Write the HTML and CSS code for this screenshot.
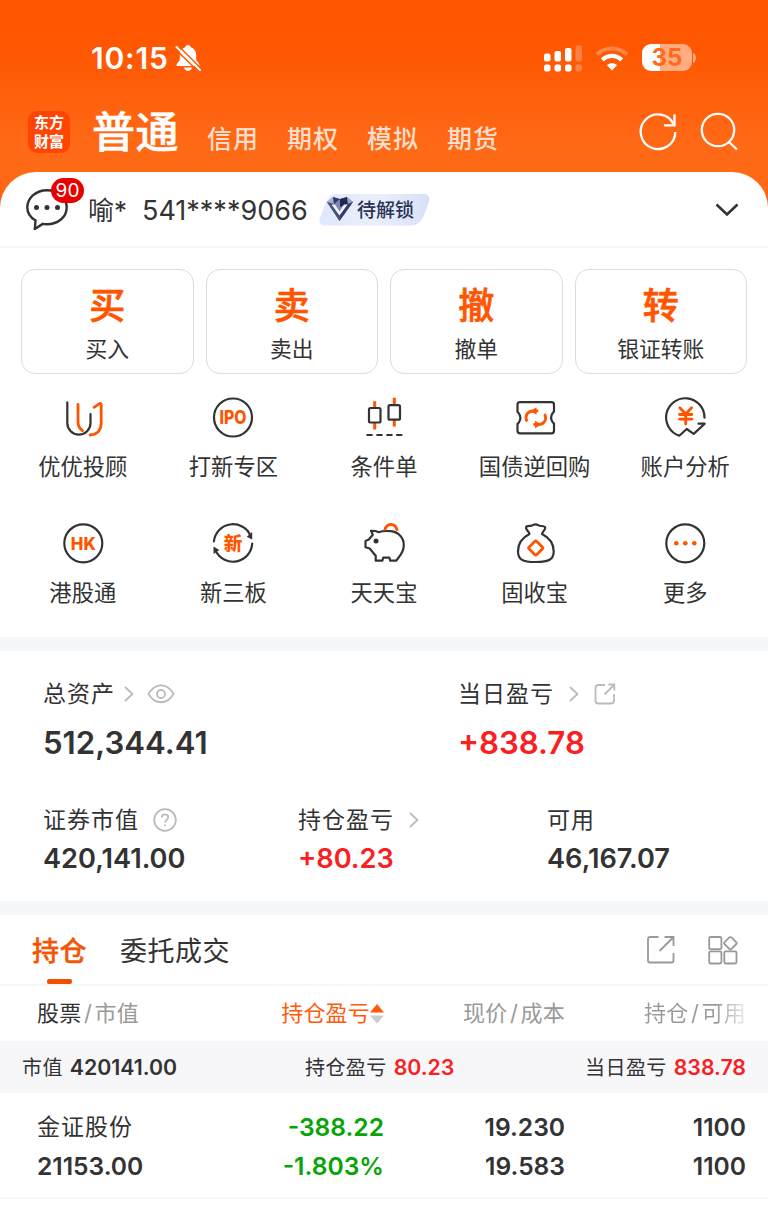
FILE: index.html
```html
<!DOCTYPE html>
<html lang="zh-CN">
<head>
    <meta charset="UTF-8">
    <meta name="viewport" content="width=device-width, initial-scale=1.0">
    <title>普通交易</title>
    <link rel="stylesheet" href="styles.css">
</head>
<body>
    <header class="top">
        <div class="status">
            <span class="time">10:15</span>
            <svg class="bell" width="28" height="28" viewBox="0 0 28 28">
                <path d="M14 1c-1.600 0-2.600 1-2.800 2.300C7.500 4.500 5.800 7.500 5.800 11v4.500c0 1.800-3.300 3.500-3.300 5.500 0 .7.500 1 1.200 1h20.600c.7 0 1.200-.3 1.200-1 0-2-3.300-3.700-3.300-5.500V11c0-3.500-1.700-6.500-5.400-7.700C16.600 2 15.600 1 14 1zM10 23.500h8c-.5 2.200-2 3.500-4 3.500s-3.500-1.300-4-3.500z" fill="#fff"/>
                <path d="M4.500 2L27 24.500" stroke="#ff5a03" stroke-width="1.600"/>
                <path d="M2.500 3L26 26" stroke="#fff" stroke-width="2" stroke-linecap="round"/>
                <path d="M1.500 5.200L23.500 26.700" stroke="#ff5a03" stroke-width="1.600"/>
            </svg>
            <svg class="signal" width="40" height="28" viewBox="0 0 40 28">
                <g fill="#fff">
                    <rect x="1" y="9.500" width="6.500" height="8" rx="2"/>
                    <rect x="11.500" y="7" width="6.500" height="10.500" rx="2"/>
                    <rect x="22" y="4" width="6.500" height="13.500" rx="2"/>
                    <rect x="1" y="20.500" width="6.500" height="7" rx="2"/>
                    <rect x="11.500" y="20.500" width="6.500" height="7" rx="2"/>
                    <rect x="22" y="20.500" width="6.500" height="7" rx="2"/>
                    <g opacity=".25">
                        <rect x="32.500" y="1.500" width="6.500" height="16" rx="2"/>
                        <rect x="32.500" y="20.500" width="6.500" height="7" rx="2"/>
                    </g>
                </g>
            </svg>
            <svg class="wifi" width="34" height="26" viewBox="0 0 34 26">
                <path d="M2 9.500C10.500 1.500 23.500 1.500 32 9.500" fill="none" stroke="#fff" stroke-opacity=".28" stroke-width="4"/>
                <path d="M7.300 15C13 9.600 21 9.600 26.700 15" fill="none" stroke="#fff" stroke-width="4.200"/>
                <path d="M17 25.500l-5-5.300c2.800-2.500 7.200-2.500 10 0z" fill="#fff"/>
            </svg>
            <div class="battery"><span>35</span></div>
            <svg class="nub" width="4" height="10" viewBox="0 0 4 10"><path d="M0 0c4 1.500 4 8.500 0 10z" fill="#fff" opacity=".5"/></svg>
        </div>
        <div class="modes">
            <div class="logo">东方<br>财富</div>
            <a class="mode current">普通</a>
            <a class="mode">信用</a>
            <a class="mode">期权</a>
            <a class="mode">模拟</a>
            <a class="mode">期货</a>
            <svg class="refresh" width="40" height="40" viewBox="0 0 40 40" fill="none" stroke="#fff" stroke-width="2.300">
                <path d="M38.300 20A17.300 17.300 0 1 1 36.700 12.500"/>
                <path d="M37.500 2.300V13.300H27"/>
            </svg>
            <svg class="search" width="40" height="40" viewBox="0 0 40 40" fill="none" stroke="#fff" stroke-width="2.300">
                <circle cx="19" cy="18" r="16.200"/>
                <path d="M29.500 29.500l8.500 8"/>
            </svg>
        </div>
    </header>

    <main class="sheet">
        <div class="account">
            <div class="message">
                <svg width="44" height="44" viewBox="0 0 44 44">
                    <path d="M10.500 34.500C5.500 31.500 2.300 27 2.300 21.500 2.300 11.800 11.200 4.200 22 4.200s19.700 7.600 19.700 17.300S32.800 38.300 22 38.300c-1.500 0-3-.1-4.300-.4L9.800 43z" fill="none" stroke="#333" stroke-width="2.400"/>
                    <g fill="#333"><circle cx="11.500" cy="21.500" r="2.500"/><circle cx="22" cy="21.500" r="2.500"/><circle cx="32.500" cy="21.500" r="2.500"/></g>
                </svg>
                <span class="count">90</span>
            </div>
            <span class="owner">喻*</span>
            <span class="number">541****9066</span>
            <div class="unlock">
                <svg width="112" height="32" viewBox="0 0 112 32">
                    <defs>
                        <linearGradient id="pill" x1="0" x2="1"><stop offset="0" stop-color="#e0e7fa"/><stop offset=".5" stop-color="#e9effc"/><stop offset="1" stop-color="#d9e1f8"/></linearGradient>
                    </defs>
                    <path d="M15 0H104c5 0 7.500 3 6 7.500L105.500 20c-3 7.500-7 11.500-14 11.500H6c-5 0-6.500-3-5-7.500L6 11C8.500 4 11 0 17 0z" fill="url(#pill)"/>
                    <path d="M8 8l6-5 7 2 7-2 6 5-13.500 19z" fill="#7d88b5"/>
                    <path d="M8 8l6-5 1 7z" fill="#a7b2d8"/>
                    <path d="M14 3l7 2-6 5z" fill="#303a63"/>
                    <path d="M21 5l7-2 1 7-8 3z" fill="#1e2850"/>
                    <path d="M28 3l6 5-5 2z" fill="#969fc6"/>
                    <path d="M15 10l6 10-.5 7L8 8z" fill="#45507f"/>
                    <path d="M29 10l-8 10-.5 7L34 8z" fill="#303b6b"/>
                    <path d="M12.500 10.500l8 11L28.500 10.500h-3.500l-4.500 7-4.500-7z" fill="#f3f4fa"/>
                </svg>
                <span>待解锁</span>
            </div>
            <svg class="expand" width="26" height="16" viewBox="0 0 26 16"><path d="M2.500 2.500L13 12.500 23.500 2.500" fill="none" stroke="#333" stroke-width="2.600"/></svg>
        </div>

        <div class="cards">
            <a class="card"><b>买</b><span>买入</span></a>
            <a class="card"><b>卖</b><span>卖出</span></a>
            <a class="card"><b>撤</b><span>撤单</span></a>
            <a class="card"><b>转</b><span>银证转账</span></a>
        </div>

        <div class="menu">
            <a class="entry">
                <svg class="icon" viewBox="0 0 48 48">
                    <path d="M8.300 9.300V30a11.600 11.600 0 0 0 23.200 0V21"/>
                    <path class="hot" d="M19 11.500V29c0 4 1.500 6.500 4.500 8.700M35 14.300l5.200-3.500c1-.6 2-.2 2 1V30c0 7-4 11.500-11.200 12"/>
                </svg>
                <span>优优投顾</span>
            </a>
            <a class="entry">
                <svg class="icon" viewBox="0 0 48 48">
                    <circle cx="24" cy="24.500" r="19"/>
                    <text x="24" y="31" textLength="27" lengthAdjust="spacingAndGlyphs" font-size="18.500">IPO</text>
                </svg>
                <span>打新专区</span>
            </a>
            <a class="entry">
                <svg class="icon" viewBox="0 0 48 48">
                    <path class="hot wick" d="M14.700 8.300v6M14.700 30v6.500M34.300 4.700V12M34.300 27v6.500"/>
                    <rect x="9" y="15" width="11.500" height="14.500" rx="1.500"/>
                    <rect x="28.500" y="12.200" width="11.500" height="14.500" rx="1.500"/>
                    <path d="M7.300 42h4.500M17.200 42h4.500M27.200 42h4.500M37 42h4.500"/>
                </svg>
                <span>条件单</span>
            </a>
            <a class="entry">
                <svg class="icon" viewBox="0 0 48 48">
                    <path d="M9 9.200H40.500q2.500 0 2.500 2.500V18.500l-1.500 1.800q-2.800 4.300 0 8.600L43 30.800v7q0 2.500-2.500 2.500H9q-2.500 0-2.500-2.500V31L8 29.200q2.800-4.300 0-8.600L6.500 18.800V11.700Q6.500 9.200 9 9.200z"/>
                    <path class="hot" d="M15.600 27.500c-2-5.500 1.500-9.500 7-9.500H26M34 22c2 5.500-1.500 9.500-7 9.500H23.500"/>
                    <path class="dot" d="M25.500 14.200v7.600L19.500 18zM24 27.700v7.600l6.500-3.800z"/>
                </svg>
                <span>国债逆回购</span>
            </a>
            <a class="entry">
                <svg class="icon" viewBox="0 0 48 48">
                    <path d="M43.500 24.700A19.200 19.200 0 1 0 18.300 42.700L25.700 36l7 4.900 11-10.200H37.500"/>
                    <path class="hot" d="M18.800 14.800l5.900 6.200 5.900-6.200M18.500 21.500h12.400M18.500 26.200h12.400M24.700 21.500V31"/>
                </svg>
                <span>账户分析</span>
            </a>
            <a class="entry">
                <svg class="icon" viewBox="0 0 48 48">
                    <circle cx="24.300" cy="24.300" r="19"/>
                    <text x="24.300" y="30.700" textLength="25" lengthAdjust="spacingAndGlyphs" font-size="17.500">HK</text>
                </svg>
                <span>港股通</span>
            </a>
            <a class="entry">
                <svg class="icon" viewBox="0 0 48 48">
                    <path d="M4.900 22.500A19.200 19.200 0 0 1 41.500 16.500M43.200 24.500A19.200 19.200 0 0 1 6.800 32"/>
                    <path class="tip" d="M43.200 13v7.500l-5.500-2.800zM4.500 35v-7.500L10.300 31z"/>
                    <text x="24" y="31" font-size="18.500">新</text>
                </svg>
                <span>新三板</span>
            </a>
            <a class="entry">
                <svg class="icon" viewBox="0 0 48 48">
                    <path d="M5.500 22l3.300-1.500 4-4.700-1.800-4 4.500.2 3.200 1.200c4-1.500 7-1.500 12-1 8 1 13.100 6.500 13.100 13.800 0 5.500-2.500 9.500-5.700 13.200l-2 2.500H30.200l-.8-3H23.200l-.8 3H15.700V36.700l-6-7.200-4.200-1.200z"/>
                    <circle class="tip" cx="16" cy="22" r="2.500"/>
                    <path class="hot coin" d="M24.600 11.300c1.200-4 3.600-5.800 6.200-5.800 3.200 0 5.600 2.200 6.500 6.300"/>
                </svg>
                <span>天天宝</span>
            </a>
            <a class="entry">
                <svg class="icon" viewBox="0 0 48 48">
                    <path d="M18.500 15c-.5-2.500-4-4.500-3.500-6.500.6-2.300 3.800-1.200 5.300-1.700 1.600-.6 2.300-1.500 4.200-1.500s2.600.9 4.200 1.500c1.500.5 4.900-.4 5.500 1.700.5 2-2.700 4-3.200 6.500 7 3.500 11.700 9.500 11.700 17.500 0 7.500-4 10.500-18 10.500S7 40 7 32.500C7 24.500 11.500 18.500 18.500 15z"/>
                    <rect class="hot" x="19.300" y="23.600" width="10.800" height="10.800" rx="1.500" transform="rotate(45 24.700 29)"/>
                </svg>
                <span>固收宝</span>
            </a>
            <a class="entry">
                <svg class="icon" viewBox="0 0 48 48">
                    <circle cx="24.300" cy="24.300" r="19"/>
                    <circle class="dot" cx="15.300" cy="24.300" r="2.300"/><circle class="dot" cx="24.300" cy="24.300" r="2.300"/><circle class="dot" cx="33.300" cy="24.300" r="2.300"/>
                </svg>
                <span>更多</span>
            </a>
        </div>

        <section class="assets">
            <div class="row first">
                <div class="item">
                    <div class="label">总资产
                        <svg class="arrow" width="10" height="16" viewBox="0 0 10 16"><path d="M1 1l7.500 7L1 15"/></svg>
                        <svg class="eye" width="28" height="20" viewBox="0 0 28 20"><path d="M1.500 10C8-1.500 20-1.500 26.500 10 20 21 8 21 1.500 10z"/><circle cx="14" cy="10" r="4"/></svg>
                    </div>
                    <div class="value">512,344.41</div>
                </div>
                <div class="item">
                    <div class="label">当日盈亏
                        <svg class="arrow" width="10" height="16" viewBox="0 0 10 16"><path d="M1 1l7.500 7L1 15"/></svg>
                        <svg class="share" width="22" height="22" viewBox="0 0 22 22"><path d="M11 2H4.500Q1.500 2 1.500 5V17.500q0 3 3 3H17q3 0 3-3V11M10.500 11.500L20 2M14.500 1.500H20.300V7.500"/></svg>
                    </div>
                    <div class="value up">+838.78</div>
                </div>
            </div>
            <div class="row second">
                <div class="item">
                    <div class="label">证券市值
                        <svg class="help" width="24" height="24" viewBox="0 0 24 24"><circle cx="12" cy="12" r="10.800"/><path d="M8.800 9.500c0-4.300 6.400-4.300 6.400 0 0 2.300-3.200 2.500-3.200 5M12 16.500V18"/></svg>
                    </div>
                    <div class="value">420,141.00</div>
                </div>
                <div class="item">
                    <div class="label">持仓盈亏
                        <svg class="arrow" width="10" height="16" viewBox="0 0 10 16"><path d="M1 1l7.500 7L1 15"/></svg>
                    </div>
                    <div class="value up">+80.23</div>
                </div>
                <div class="item">
                    <div class="label">可用</div>
                    <div class="value">46,167.07</div>
                </div>
            </div>
        </section>

        <section class="holdings">
            <div class="tabs">
                <a class="tab active">持仓</a>
                <a class="tab">委托成交</a>
                <svg class="export" width="30" height="30" viewBox="0 0 30 30"><path d="M12.500 2H4Q2 2 2 4V25.500q0 2 2 2H25.500q2 0 2-2V18M13.500 16L27 2.500M18.500 2H27.500V11"/></svg>
                <svg class="blocks" width="30" height="30" viewBox="0 0 30 30"><rect x="1.200" y="2" width="12.200" height="12.200" rx="1.500"/><rect x="1.200" y="16.300" width="12.200" height="12.200" rx="1.500"/><rect x="16.300" y="16.300" width="12.200" height="12.200" rx="1.500"/><rect x="17.600" y="3.400" width="9.600" height="9.600" rx="1.500" transform="rotate(45 22.400 8.200)"/></svg>
            </div>
            <div class="line head">
                <span><em>股票</em><i>/</i>市值</span>
                <span class="sort">持仓盈亏<svg width="14" height="20" viewBox="0 0 14 20"><path d="M7 0l7 8.500H0z" fill="#ff5a0a"/><path d="M7 19.500l-7-8h14z" fill="#ccc"/></svg></span>
                <span>现价<i>/</i>成本</span>
                <span class="fade">持仓<i>/</i>可用</span>
            </div>
            <div class="total">
                <span>市值 <b>420141.00</b></span>
                <span>持仓盈亏 <b class="up">80.23</b></span>
                <span>当日盈亏 <b class="up">838.78</b></span>
            </div>
            <div class="stock">
                <div class="line">
                    <span class="name">金证股份</span>
                    <span class="down">-388.22</span>
                    <span>19.230</span>
                    <span>1100</span>
                </div>
                <div class="line">
                    <span>21153.00</span>
                    <span class="down">-1.803%</span>
                    <span>19.583</span>
                    <span>1100</span>
                </div>
            </div>
        </section>
    </main>
</body>
</html>
```
FILE: styles.css
```css
* {
    box-sizing: border-box;
}
body {
    margin: 0;
    width: 768px;
    height: 1211px;
    overflow: hidden;
    background-color: #fff;
    color: #333;
    font-family: Inter, "Noto Sans CJK SC", sans-serif;
}
svg {
    display: block;
    flex: none;
}
.top {
    height: 210px;
    padding: 0 28px;
    background: linear-gradient(#ff5500 0, #ff5702 50px, #ff6a17 150px, #ff6a17 172px, #ff6310 210px);
    color: #fff;
}

/* status bar */
.status {
    display: flex;
    align-items: center;
    height: 102px;
    padding: 13px 43px 0 63px;
}
.time {
    width: 79px;
    font-size: 30px;
    font-weight: 600;
    letter-spacing: .8px;
    line-height: 30px;
    white-space: nowrap;
}
.bell {
    margin-left: 4px;
}
.signal {
    margin-left: auto;
}
.wifi {
    margin: 0 13px 0 12px;
}
.battery {
    width: 50px;
    height: 27px;
    border-radius: 9px;
    background: linear-gradient(90deg, #fff 36%, #ffac80 36%);
    color: #ff6a1a;
    font-size: 24px;
    font-weight: 700;
    line-height: 27px;
    text-align: center;
}
.nub {
    margin-left: 1px;
}

/* account type switch */
.modes {
    display: flex;
    align-items: center;
    height: 60px;
}
.logo {
    width: 42px;
    height: 42px;
    padding-top: 2px;
    margin-right: 22px;
    border-radius: 9px;
    background-color: #ff4505;
    font-family: "Noto Sans CJK SC", sans-serif;
    font-size: 15px;
    font-weight: 700;
    line-height: 18.500px;
    text-align: center;
}
.mode {
    margin: 13px 28px 0 0;
    color: rgba(255, 255, 255, .8);
    font-size: 25px;
    font-weight: 500;
    letter-spacing: 1px;
    line-height: 36px;
}
.mode.current {
    margin: 0 28px 0 0;
    color: #fff;
    font-size: 43px;
    font-weight: 500;
    letter-spacing: .5px;
    -webkit-text-stroke: .5px #fff;
    line-height: 60px;
}
.refresh {
    margin-left: auto;
}
.search {
    margin: 0 1px 0 22px;
}

.sheet {
    position: relative;
    margin-top: -38px;
    border-radius: 36px 36px 0 0;
    background-color: #fff;
}
.account {
    display: flex;
    align-items: center;
    height: 76px;
    padding: 0 28px 0 25px;
    border-bottom: 2px solid #f7f7f7;
    font-size: 27px;
    line-height: 36px;
}
.message {
    position: relative;
    margin: -3px 19px 0 0;
}
.count {
    position: absolute;
    top: -8px;
    left: 26px;
    width: 33px;
    height: 25px;
    border-radius: 13px;
    background-color: #e80000;
    color: #fff;
    font-size: 19px;
    line-height: 26px;
    text-align: center;
}
.owner {
    width: 54px;
    padding-top: 3px;
    font-size: 26px;
}
.number {
    width: 177px;
    padding-top: 3px;
}
.unlock {
    position: relative;
    margin-top: 1px;
}
.unlock span {
    position: absolute;
    top: 1px;
    left: 38px;
    color: #2b3558;
    font-size: 19px;
    font-weight: 500;
    line-height: 32px;
}
.expand {
    margin-left: auto;
    margin-top: 2px;
}

.cards {
    display: flex;
    gap: 12px;
    padding: 21px 21px 0;
}
.card {
    display: flex;
    flex: 1;
    flex-direction: column;
    align-items: center;
    height: 105px;
    padding-top: 12px;
    border: 1px solid #dcdcdc;
    border-radius: 14px;
    font-size: 21.800px;
    line-height: 32px;
}
.card b {
    margin-bottom: 3px;
    color: #ff5500;
    font-size: 36px;
    font-weight: 500;
    -webkit-text-stroke: .7px #ff5500;
    line-height: 48px;
}
.menu {
    display: grid;
    grid-template-columns: repeat(5, 1fr);
    height: 263px;
    padding: 19px 7.500px 0;
}
.entry {
    display: flex;
    flex-direction: column;
    align-items: center;
    height: 126px;
    font-size: 22.300px;
    line-height: 32px;
}
.icon {
    width: 48px;
    height: 48px;
    margin-bottom: 10px;
    fill: none;
    stroke: #333;
    stroke-width: 2.200;
    stroke-linecap: round;
    stroke-linejoin: round;
}
.icon .hot {
    stroke: #ff5500;
    stroke-width: 2.800;
}
.icon .wick {
    stroke-width: 3;
    stroke-linecap: butt;
}
.icon .coin {
    stroke-linecap: butt;
}
.icon .dot {
    fill: #ff5500;
    stroke: none;
}
.icon .tip {
    fill: #333;
    stroke: none;
}
.icon text {
    fill: #ff5500;
    stroke: none;
    font-weight: 800;
    text-anchor: middle;
}

/* assets */
.assets {
    height: 278px;
    padding: 27px 43px 0;
    border-top: 14px solid #f6f7f9;
    border-bottom: 14px solid #f6f7f9;
}
.row {
    display: grid;
    height: 126px;
    align-content: start;
}
.row.first {
    grid-template-columns: 415px 1fr;
}
.row.second {
    grid-template-columns: 255px 249px 1fr;
}
.label {
    display: flex;
    align-items: center;
    height: 32px;
    font-size: 23px;
    letter-spacing: 1px;
    line-height: 32px;
}
.label svg {
    fill: none;
    stroke: #bbb;
    stroke-width: 1.800;
}
.arrow {
    margin-left: 9px;
}
.second .arrow, .first .item:last-child .arrow {
    margin-left: 15px;
}
.eye {
    margin-left: 13px;
}
.share {
    margin-left: 15px;
}
.help {
    margin-left: 14px;
}
.value {
    font-size: 27.200px;
    font-weight: 600;
    line-height: 46px;
}
.first .value {
    font-size: 31.200px;
    line-height: 66px;
}
.up {
    color: #f9201f;
}
.down {
    color: #06a406;
}

/* holdings */
.tabs {
    display: flex;
    align-items: center;
    height: 71px;
    padding: 0 30px 0 32px;
    border-bottom: 2px solid #f7f7f7;
}
.tab {
    position: relative;
    padding-top: 5px;
    margin-right: 33px;
    font-size: 27px;
    letter-spacing: .5px;
    line-height: 64px;
}
.tab.active {
    color: #f35505;
    font-weight: 500;
    -webkit-text-stroke: .4px #f35505;
}
.tab.active::after {
    content: "";
    position: absolute;
    bottom: 0;
    left: 15px;
    width: 25px;
    height: 5px;
    border-radius: 2px;
    background-color: #f05000;
}
.tabs svg {
    fill: none;
    stroke: #999;
    stroke-width: 1.800;
}
.export {
    margin-left: auto;
}
.blocks {
    margin-left: 32px;
}
.line {
    display: grid;
    grid-template-columns: 167px 180px 181px 181px;
    padding-left: 37px;
    font-size: 24.600px;
    font-weight: 600;
    line-height: 39px;
}
.line > span {
    text-align: right;
    white-space: nowrap;
}
.line > span:first-child {
    text-align: left;
}
.head {
    height: 55px;
    color: #999;
    font-size: 22px;
    font-weight: 400;
    letter-spacing: .2px;
    line-height: 55px;
}
.head em {
    color: #333;
    font-style: normal;
}
.head i {
    margin: 0 2.500px;
    font-style: normal;
}
.line .sort {
    display: flex;
    justify-content: flex-end;
    align-items: center;
    color: #ff5a0a;
}
.head .fade {
    background: linear-gradient(90deg, #999 83%, #eee 100%);
    background-clip: text;
    -webkit-background-clip: text;
    color: transparent;
}
.total {
    display: grid;
    grid-template-columns: 283px 1fr auto;
    height: 52px;
    padding: 0 22px;
    background-color: #f7f7fa;
    font-size: 20px;
    letter-spacing: .4px;
    line-height: 53px;
}
.total b {
    margin-left: 1px;
    font-size: 21.300px;
    font-weight: 600;
    letter-spacing: 0;
}
.stock {
    height: 106px;
    padding-top: 15px;
    border-bottom: 2px solid #f7f7f7;
}
.stock .name {
    font-size: 23px;
    font-weight: 400;
    letter-spacing: 1px;
}
```
